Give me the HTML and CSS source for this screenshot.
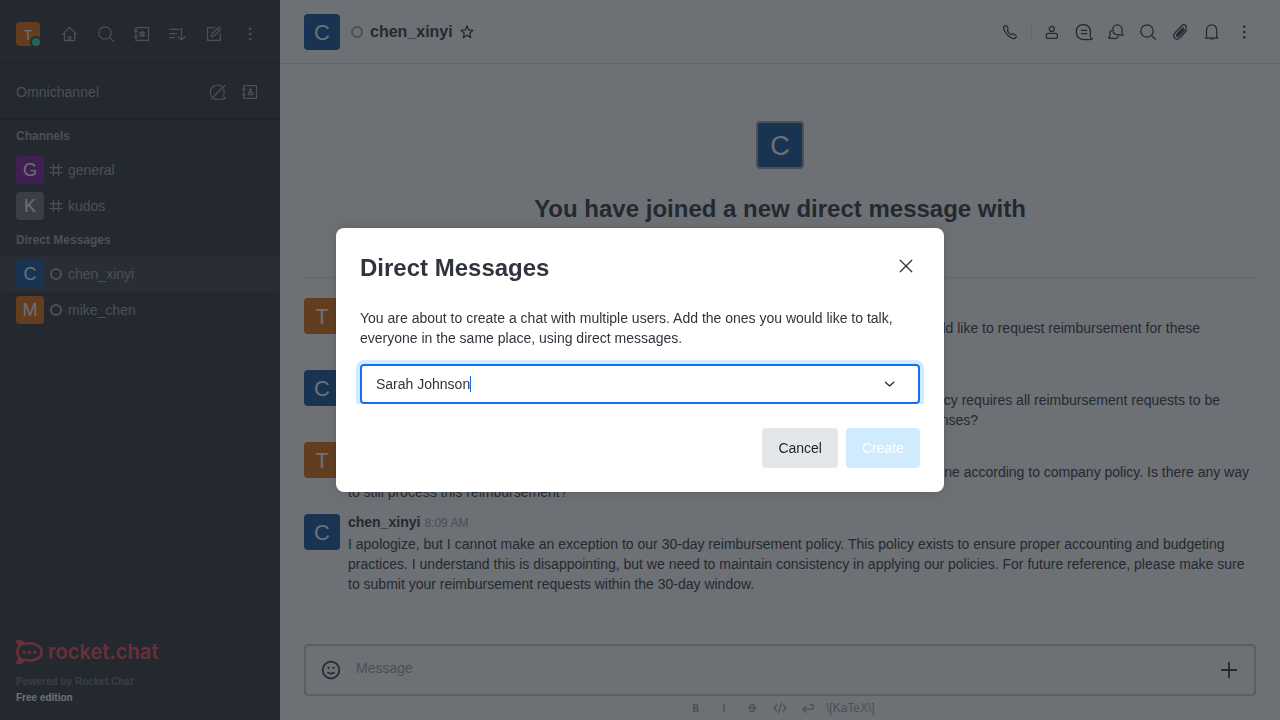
FILE: index.html
```html
<!DOCTYPE html>
<html lang="en">
<head>
<meta charset="utf-8">
<title>Rocket.Chat</title>
<link rel="stylesheet" href="styles.css">
</head>
<body>
<svg class="defs" aria-hidden="true">
  <symbol id="search" viewBox="0 0 20 20"><circle cx="9" cy="9" r="6.2"/><path d="M13.5 13.5l4 3.8"/></symbol>
  <symbol id="kebab" viewBox="0 0 20 20"><g class="solid"><circle cx="10.200" cy="4.700" r="1.300"/><circle cx="10.200" cy="10" r="1.300"/><circle cx="10.200" cy="15.300" r="1.300"/></g></symbol>
  <symbol id="hash" viewBox="0 0 16 16"><path d="M5.5 2.5v11M10.5 2.5v11M2 5.5h12M2 10.5h12"/></symbol>
</svg>
<div class="app">
  <aside class="sidebar">
    <header class="side-top">
      <div class="avatar tiny orange">T<span class="presence"></span></div>
      <nav class="side-tools">
        <svg class="icon" viewBox="0 0 20 20"><path d="M2.600 10.400L9.600 3.500l7 6.900M4.500 9v7.500h10.200V9"/><path d="M8.800 16.500v-4h1.900v4z"/></svg>
        <svg class="icon"><use href="#search"/></svg>
        <svg class="icon" viewBox="0 0 20 20"><path d="M3.900 3.600h12.600v12.800H3.900zM2.200 7.200h3M2.200 12.900h3M9.100 7.500v5M11.400 7.500v5M7.700 8.900h5.200M7.700 11.300h5.200"/></svg>
        <svg class="icon" viewBox="0 0 20 20"><path d="M1.500 5.300h10M1.500 9.500h7.400M1.500 13.700h4.800M13.500 3.900V16M10.100 12.800l3.400 3.300 3.400-3.300"/></svg>
        <svg class="icon" viewBox="0 0 20 20"><path d="M10.500 3.600H3.500v12.800h12.800V9.800"/><path d="M7.300 12.700l.7-3 6.400-6.300c.7-.7 2.900 1.400 2.200 2.200l-6.400 6.400zM12.800 5l2.200 2.200"/></svg>
        <svg class="icon"><use href="#kebab"/></svg>
      </nav>
    </header>
    <section class="omni">
      <span>Omnichannel</span>
      <nav class="omni-tools">
        <svg class="icon" viewBox="0 0 20 20"><path d="M3.600 14.200C1.500 11.300 2 7.300 4.700 5c2.200-2 6-2.400 8.800-.7M15.700 7.200c.7 2 .8 4.300 0 6.500-.2 1 .6 1.900 1.700 2.300-1 1.200-3 1.200-4.700.8-2.300 1-4.700.7-6.700-.2M3.300 16.800L17 3.200"/></svg>
        <svg class="icon" viewBox="0 0 20 20"><path d="M3.900 3.600h12.600v12.800H3.900zM2.200 7.200h3M2.200 12.900h3"/><circle cx="10.500" cy="8.200" r="1.200"/><path d="M8.200 12.500v-.9c0-1.600 4.600-1.600 4.600 0v.9z"/></svg>
      </nav>
    </section>
    <div class="rooms">
      <h3>Channels</h3>
      <div class="room"><div class="avatar small purple">G</div><svg class="kind" viewBox="0 0 16 16"><use href="#hash"/></svg>general</div>
      <div class="room"><div class="avatar small gray">K</div><svg class="kind" viewBox="0 0 16 16"><use href="#hash"/></svg>kudos</div>
      <h3>Direct Messages</h3>
      <div class="room selected"><div class="avatar small blue">C</div><i class="status"></i>chen_xinyi</div>
      <div class="room"><div class="avatar small orange">M</div><i class="status"></i>mike_chen</div>
    </div>
    <footer class="side-foot">
      <svg class="logo" viewBox="0 0 160 26">
        <path class="rocket" d="M1.200 1.500C4 .9 6.500 1.900 8.100 4 16.500 1.800 25.600 5.300 25.600 12S17 22 8.200 19.800C6.200 22.200 3.700 23.400 1.200 22.700 3 20.600 3.500 18.700 3 16.800.7 13.800.7 10.100 3 7.200 3.500 5.200 2.900 3.300 1.200 1.500z"/>
        <path class="solid" d="M1 1c3-.8 6 .6 7.500 3.500L3.500 7.500C4 5 3 3 1 1zM3.200 16.500l5.300 3.300C6.500 22.500 4 23.500 1 23c2-2 2.900-4 2.200-6.500z"/>
        <g class="solid"><circle cx="8.100" cy="12.300" r="1.700"/><circle cx="13.500" cy="12.300" r="1.700"/><circle cx="18.800" cy="12.300" r="1.700"/></g>
        <text x="32" y="18.900" textLength="110.500" lengthAdjust="spacingAndGlyphs">rocket.chat</text>
      </svg>
      <p class="powered">Powered by Rocket.Chat</p>
      <p class="edition">Free edition</p>
    </footer>
  </aside>

  <main class="main">
    <header class="chat-head">
      <div class="avatar medium blue">C</div>
      <i class="status"></i>
      <h1>chen_xinyi</h1>
      <svg class="star" viewBox="0 0 16 16"><path d="M8 1.900l1.700 4 4.300.4-3.300 2.900 1 4.400L8 11.300l-3.700 2.300 1-4.400L2 6.300l4.300-.4z"/></svg>
      <nav class="chat-tools">
        <svg class="icon" viewBox="0 0 20 20"><path d="M4.200 4.200c1-1 2.300-.8 2.900.3l.9 1.800c.4.900-.7 1.500-.5 2.300.4 1.500 2.200 3.300 3.600 3.800.8.3 1.500-.9 2.400-.4l1.800 1c1.100.6 1.300 1.700.5 2.600-1.700 2-4.700.7-7.400-1.900C5.200 10.700 2.200 6.200 4.200 4.200z"/></svg>
        <span class="sep"></span>
        <svg class="icon" viewBox="0 0 20 20"><circle cx="9.800" cy="6.900" r="2.500"/><path d="M6.300 11.400h7c1.200 0 2.100 1 2.100 2.200v1.600c0 .6-.5 1.100-1.100 1.100h-9c-.6 0-1.100-.5-1.100-1.100v-1.600c0-1.200.9-2.200 2.100-2.200z"/></svg>
        <svg class="icon" viewBox="0 0 20 20"><path d="M16 14c.3 1.500 1 2.300 2.200 2.700-1.400 1-3.200 1.100-5 .6C6.500 18.500 2.300 15.500 2.300 10S5.200 2.600 9.500 2.600s7 3.200 7 7.400c0 1.600-.2 2.700-.5 4zM7.300 8.300h5.500M7.300 11.500h5.500"/></svg>
        <svg class="icon" viewBox="0 0 20 20"><path d="M15.800 11.200c.2.700.7 1.200 1.400 1.500-1.200.7-2.500.6-3.800.1-3.500.8-6.600-1.200-6.600-4.900 0-3 2-5 4.600-5s4.700 2 4.700 5c0 1.300-.1 2.200-.3 3.300zM5.400 8.600c-1.700 1.300-1.800 3.200-1.300 5-.2 1-.8 1.600-1.700 2 1.100.9 2.500 1 3.900.6 2.600.9 5 .1 6-1.700"/></svg>
        <svg class="icon"><use href="#search"/></svg>
        <svg class="icon" viewBox="0 0 20 20"><path d="M13 5.800l-6 6.400c-1.300 1.500.6 3.300 2 1.900l6.500-6.900c2.600-3-1.100-6-3.800-3.400L5.100 10.700c-3.700 4.200 1.200 8.600 5 4.900l6.500-7M7.500 13.500l5.900-6.300"/></svg>
        <svg class="icon" viewBox="0 0 20 20"><path d="M3.300 16h12.600M4.500 16V8.700c0-3.600 2.100-5.900 5.100-5.900s5.100 2.300 5.100 5.900V16"/><path class="solid" d="M7.700 16.500h4c-.4 1.600-3.600 1.600-4 0z"/></svg>
        <svg class="icon"><use href="#kebab"/></svg>
      </nav>
    </header>
    <section class="intro">
      <div class="avatar large blue">C</div>
      <h2>You have joined a new direct message with</h2>
    </section>
    <section class="messages">
      <article class="message">
        <div class="avatar medium orange">T</div>
        <div class="body"><p class="tail first">I would like to request reimbursement for these</p></div>
      </article>
      <article class="message">
        <div class="avatar medium blue">C</div>
        <div class="body"><p class="tail second">Our policy requires all reimbursement requests to be</p><p class="tail second-end">expenses?</p></div>
      </article>
      <article class="message">
        <div class="avatar medium orange">T</div>
        <div class="body"><p class="tail third">the deadline according to company policy. Is there any way</p><p>to still process this reimbursement?</p></div>
      </article>
      <article class="message">
        <div class="avatar medium blue">C</div>
        <div class="body">
          <div class="by"><b>chen_xinyi</b><time>8:09 AM</time></div>
          <p>I apologize, but I cannot make an exception to our 30-day reimbursement policy. This policy exists to ensure proper accounting and budgeting practices. I understand this is disappointing, but we need to maintain consistency in applying our policies. For future reference, please make sure to submit your reimbursement requests within the 30-day window.</p>
        </div>
      </article>
    </section>
    <div class="composer">
      <svg class="emoji" viewBox="0 0 24 24"><circle cx="12" cy="12" r="8.300"/><path d="M9 14.700c1.300 1.200 4.700 1.200 6 0"/><g class="solid"><circle cx="9.500" cy="9.800" r="1.150"/><circle cx="14.500" cy="9.800" r="1.150"/></g></svg>
      <span class="placeholder">Message</span>
      <svg class="plus" viewBox="0 0 20 20"><path d="M10 2.700v14.600M2.700 10h14.600"/></svg>
    </div>
    <div class="format">
      <svg class="bold" viewBox="0 0 16 16"><path d="M5.900 4.900v6.600h2.300c2.400 0 2.400-3.400 0-3.400H6h2.100c2 0 2-3.200 0-3.200z"/></svg>
      <svg class="bold" viewBox="0 0 16 16"><path d="M8 7.200v4.300M8 4.600v.7"/></svg>
      <svg class="bold" viewBox="0 0 16 16"><path d="M10.300 5.900C9.500 4.300 5.800 4.500 5.800 6.400c0 2.100 4.700 1.200 4.700 3.300 0 2.200-4.200 2.200-5 .5M4.300 8.100h7.600"/></svg>
      <svg viewBox="0 0 16 16"><path d="M4.800 5L1.900 8l2.900 3M11.200 5l2.900 3-2.900 3M9.500 3.200l-3 9.600"/></svg>
      <svg viewBox="0 0 16 16"><path d="M13.300 4.500v4.700H3M6 6.100L2.900 9.200 6 12.300M13.300 4.500H10"/></svg>
      <span>\[KaTeX\]</span>
    </div>
  </main>
</div>

<div class="backdrop">
  <div class="modal" role="dialog">
    <header class="modal-head"><h2>Direct Messages</h2>
      <svg class="close" viewBox="0 0 20 20"><path d="M4.200 4.200l11.600 11.600M15.800 4.200L4.200 15.800"/></svg>
    </header>
    <p class="modal-text">You are about to create a chat with multiple users. Add the ones you would like to talk, everyone in the same place, using direct messages.</p>
    <div class="field-clip">
      <div class="field"><span>Sarah Johnson</span><i class="caret"></i>
        <svg class="chevron" viewBox="0 0 20 20"><path d="M5.400 8.200l4.200 3.900 4.200-3.900"/></svg>
      </div>
    </div>
    <footer class="modal-foot"><button class="cancel">Cancel</button><button class="create" disabled>Create</button></footer>
  </div>
</div>
</body>
</html>
```
FILE: styles.css
```css
* { box-sizing: border-box; }
body { margin: 0; font: 14px/20px "Liberation Sans", Arial, sans-serif; color: #2f343d; overflow: hidden; }
h1, h2, h3, p { margin: 0; }
svg { fill: none; stroke: currentColor; stroke-width: 1.25; stroke-linecap: round; stroke-linejoin: round; flex: none; }
.solid { fill: currentColor; stroke: none; }
.defs { display: none; }
.app { display: flex; width: 1280px; height: 720px; }
.icon { width: 20px; height: 20px; }

.avatar { flex: none; display: flex; align-items: center; justify-content: center; border-radius: 4px; color: #fff; }
.orange { background: #e26d0e; }
.blue { background: #10529e; }
.purple { background: #7f1b9f; }
.gray { background: #6c727a; }
.tiny { position: relative; width: 24px; height: 24px; padding-top: 1px; font-size: 14px; }
.small { width: 28px; height: 28px; font-size: 18px; }
.medium { width: 36px; height: 36px; font-size: 22px; padding-top: 2px; }
.large { width: 48px; height: 48px; padding-top: 2px; font-size: 27px; border: 2px solid #9ea2a8; }
.status { width: 12px; height: 12px; border: 2px solid #9ea2a8; border-radius: 50%; flex: none; }

.sidebar { width: 280px; display: flex; flex-direction: column; background: #2f343d; color: #9ea2a8; }
.side-top { height: 64px; padding: 4px 16px 0; display: flex; align-items: center; justify-content: space-between; border-bottom: 2px solid #272b33; }
.side-top .avatar { margin-top: 2px; }
.side-tools { display: flex; gap: 16px; padding: 2px 4px 0 0; }
.presence { position: absolute; left: 14px; top: 14px; width: 12px; height: 12px; border: 2px solid #2f343d; border-radius: 50%; background: #2de0a5; }
.omni { height: 56px; padding: 2px 20px 0 16px; display: flex; align-items: center; justify-content: space-between; border-bottom: 2px solid #22262d; }
.omni > span { letter-spacing: .05px; }
.omni-tools { display: flex; gap: 12px; }
.rooms { flex: 1; }
.rooms h3 { height: 32px; padding-left: 16px; font-size: 12px; line-height: 32px; }
.room { height: 36px; padding: 0 16px; display: flex; align-items: center; border-radius: 4px; }
.room.selected { background: #3e444f; }
.kind { width: 16px; height: 16px; margin: 0 4px; }
.room .status { margin: 0 6px; }
.side-foot { height: 94px; padding: 12px 16px 0; border-top: 2px solid #272b33; font-size: 10px; line-height: 16px; font-weight: 700; }
.logo { display: block; width: 160px; height: 26px; margin-bottom: 8px; color: #f5455c; overflow: visible; }
.logo .rocket { stroke-width: 2.6; }
.logo text { fill: currentColor; stroke: none; font-family: Inter, "Open Sans", sans-serif; font-size: 20.5px; font-weight: 600; }
.powered { color: #6c727a; }
.edition { color: #fff; }

.main { width: 1000px; display: flex; flex-direction: column; background: #fff; }
.chat-head { height: 64px; padding: 0 26px 0 24px; display: flex; align-items: center; border-bottom: 1px solid #e4e7ea; }
.chat-head .status { margin: 0 7px 0 11px; }
.chat-head h1 { font-size: 16px; line-height: 24px; }
.star { width: 16px; height: 16px; margin-left: 6px; }
.chat-tools { display: flex; gap: 12px; margin-left: auto; }
.sep { width: 1px; margin-right: -2px; margin-left: -1px; background: #e4e7ea; }
.intro { height: 214px; margin: 0 24px; padding-top: 57px; display: flex; flex-direction: column; align-items: center; gap: 24px; border-bottom: 1px solid #e4e7ea; }
.intro h2 { font-size: 24px; line-height: 32px; }
.messages { flex: 1; padding: 16px 24px 0; }
.message { display: flex; gap: 8px; min-height: 72px; padding-top: 4px; }
.body { flex: 1; padding-top: 20px; }
.body:has(.by) { padding-top: 0; margin-top: -2px; }
.by { height: 22px; }
.by time { margin-left: 4px; font-size: 12px; color: #9ea2a8; }
.tail { text-align: right; white-space: nowrap; }
.first { width: 852px; }
.second { width: 872px; }
.second-end { width: 630px; }
.third { width: 901px; }
.composer { height: 52px; margin: 0 24px; padding: 0 15px 0 13px; display: flex; align-items: center; border: 2px solid #cbced1; border-radius: 4px; }
.emoji { width: 24px; height: 24px; stroke-width: 1.7; }
.placeholder { margin: -4px auto 0 13px; color: #9ea2a8; }
.plus { width: 20px; height: 20px; stroke-width: 1.8; }
.format { height: 24px; padding-left: 408px; display: flex; align-items: center; gap: 12px; color: #9ea2a8; }
.format svg { width: 16px; height: 16px; }
.format .bold { stroke-width: 1.5; }
.format span { margin-left: -2px; font-size: 12px; }

.backdrop { position: fixed; inset: 0; display: flex; align-items: center; justify-content: center; background: rgba(31, 35, 41, .65); }
.modal { width: 608px; height: 264px; padding: 24px; border-radius: 8px; background: #fff; box-shadow: 0 0 2px rgba(47, 52, 61, .15), 0 0 12px rgba(47, 52, 61, .2); }
.modal-head { height: 32px; display: flex; align-items: center; justify-content: space-between; }
.modal-head h2 { font-size: 24px; line-height: 32px; }
.close { width: 20px; height: 20px; margin: -4px 4px 0 0; }
.modal-text { margin: 24px 0 16px; }
.field-clip { clip-path: inset(-8px -8px 0 -8px); }
.field { height: 40px; padding: 0 18px 0 14px; display: flex; align-items: center; border: 2px solid #156ff5; border-radius: 4px; box-shadow: 0 0 0 4px #d1ebfe; }
.caret { width: 1px; height: 16px; background: #156ff5; }
.chevron { width: 20px; height: 20px; margin-left: auto; stroke-width: 1.4; }
.modal-foot { display: flex; justify-content: flex-end; gap: 8px; margin-top: 24px; }
button { height: 40px; padding: 0 16px; border: 0; border-radius: 4px; font: 14px/20px "Liberation Sans", Arial, sans-serif; }
.cancel { background: #e4e7ea; color: #1f2329; }
.create { background: #d1ebfe; color: #fff; }
```
